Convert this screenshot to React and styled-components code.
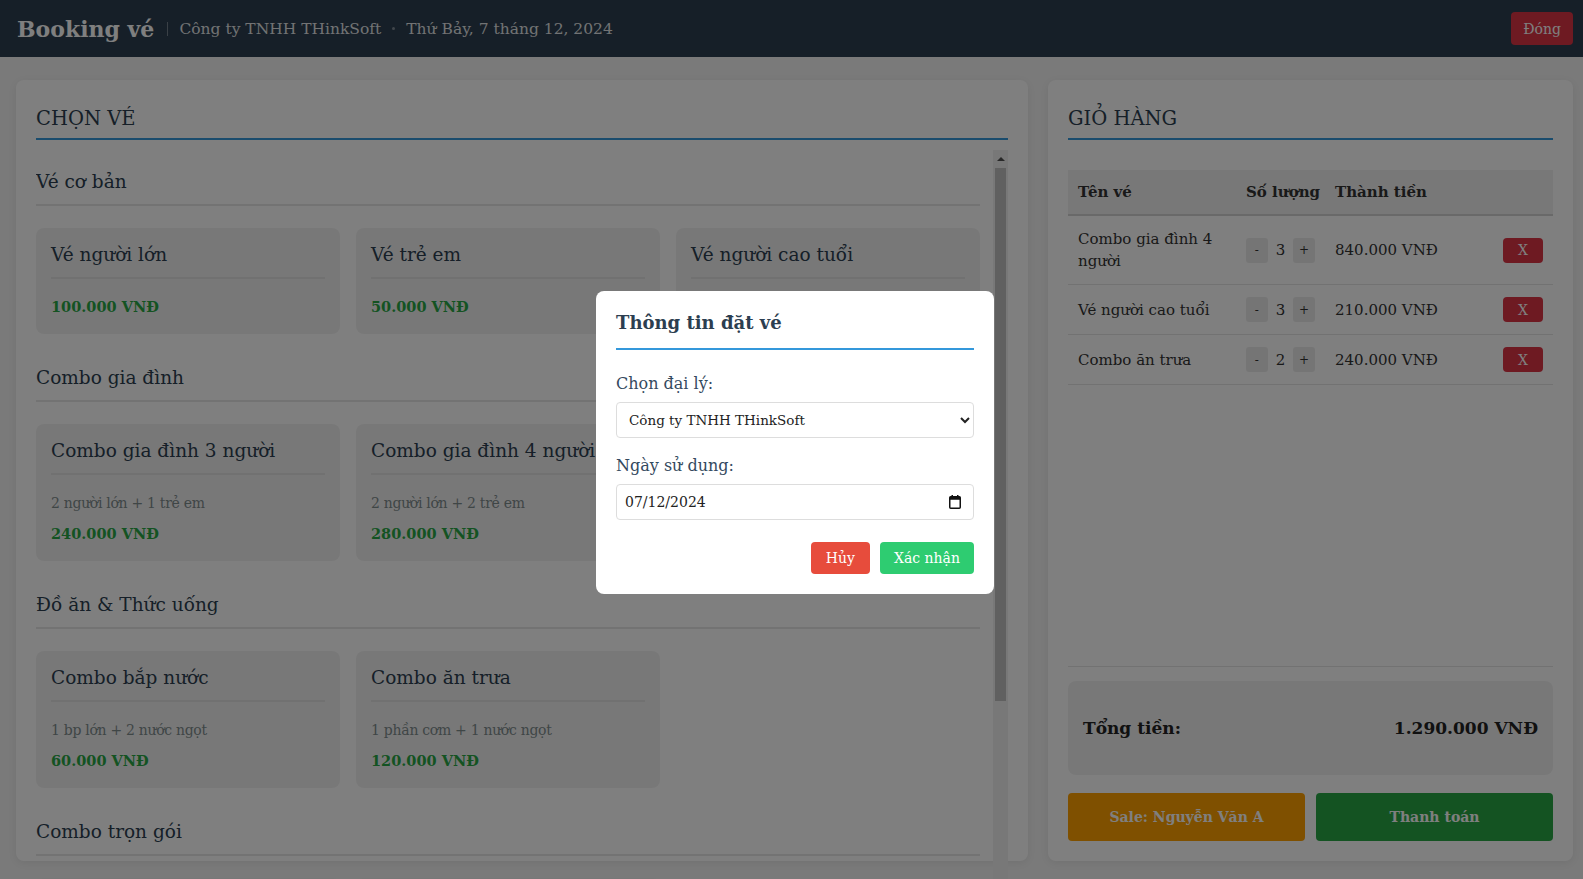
import React, { useState } from "react";
import styled, { createGlobalStyle } from "styled-components";

const GlobalStyle = createGlobalStyle`
  * { box-sizing: border-box; }
  html, body { margin: 0; padding: 0; height: 100%; overflow: hidden; }
  body {
    font-family: "DejaVu Serif", "Liberation Serif", serif;
    background: #f4f4f4;
    color: #333;
  }
`;

const serif = `"DejaVu Serif", "Liberation Serif", serif`;

const TICKETS = [
  {
    title: "Vé cơ bản",
    items: [
      { name: "Vé người lớn", price: "100.000 VNĐ" },
      { name: "Vé trẻ em", price: "50.000 VNĐ" },
      { name: "Vé người cao tuổi", price: "70.000 VNĐ" },
    ],
  },
  {
    title: "Combo gia đình",
    items: [
      { name: "Combo gia đình 3 người", desc: "2 người lớn + 1 trẻ em", price: "240.000 VNĐ" },
      { name: "Combo gia đình 4 người", desc: "2 người lớn + 2 trẻ em", price: "280.000 VNĐ" },
    ],
  },
  {
    title: "Đồ ăn & Thức uống",
    items: [
      { name: "Combo bắp nước", desc: "1 bp lớn + 2 nước ngọt", price: "60.000 VNĐ" },
      { name: "Combo ăn trưa", desc: "1 phần cơm + 1 nước ngọt", price: "120.000 VNĐ" },
    ],
  },
  {
    title: "Combo trọn gói",
    items: [
      { name: "Combo cả ngày", desc: "1 vé + 1 phần cơm + 1 nước", price: "200.000 VNĐ" },
      { name: "Combo nhóm bạn", desc: "4 vé + 2 combo bắp nước", price: "450.000 VNĐ" },
    ],
  },
];

const CART = [
  { name: "Combo gia đình 4 người", qty: 3, total: "840.000 VNĐ" },
  { name: "Vé người cao tuổi", qty: 3, total: "210.000 VNĐ" },
  { name: "Combo ăn trưa", qty: 2, total: "240.000 VNĐ" },
];

const Header = styled.header`
  height: 57px;
  background: #2c3e50;
  display: flex;
  align-items: center;
  justify-content: space-between;
  padding: 0 10px 0 17px;
`;

const Brand = styled.div`
  display: flex;
  align-items: center;
`;

const Logo = styled.h1`
  margin: 0;
  font-size: 22px;
  font-weight: bold;
  color: #fff;
`;

const Divider = styled.span`
  width: 1px;
  height: 14px;
  background: rgba(255, 255, 255, 0.35);
  margin: 0 11px 0 13px;
`;

const Meta = styled.span`
  font-size: 15.5px;
  color: rgba(255, 255, 255, 0.88);
`;

const Dot = styled.span`
  width: 3px;
  height: 3px;
  border-radius: 50%;
  background: rgba(255, 255, 255, 0.4);
  margin: 0 11px;
`;

const Button = styled.button`
  border: none;
  border-radius: 4px;
  color: #fff;
  font-family: ${serif};
  font-size: ${(p) => p.$fs || 14}px;
  cursor: pointer;
  background: ${(p) => p.$bg};
  height: ${(p) => p.$h || 32}px;
  padding: 0 ${(p) => p.$px ?? 15}px;
  font-weight: ${(p) => (p.$bold ? "bold" : "normal")};
`;

const Main = styled.main`
  height: calc(100vh - 57px);
  display: grid;
  grid-template-columns: 1fr 525px;
  gap: 20px;
  padding: 23px 10px 18px 16px;
`;

const Panel = styled.section`
  background: #fff;
  border-radius: 8px;
  box-shadow: 0 2px 8px rgba(0, 0, 0, 0.07);
  padding: 20px;
  display: flex;
  flex-direction: column;
  min-height: 0;
`;

const PanelTitle = styled.h2`
  margin: 0;
  font-size: 19.5px;
  font-weight: normal;
  color: #2c3e50;
  padding: 7px 0 8px;
  border-bottom: 2px solid #3498db;
`;

const ScrollWrap = styled.div`
  margin-top: 10px;
  height: 760px;
  flex-shrink: 0;
  display: flex;
`;

const ScrollContent = styled.div`
  flex: 1;
  min-width: 0;
  overflow: hidden;
  padding: 20px 13px 0 0;
`;

const ScrollTrack = styled.div`
  width: 15px;
  flex-shrink: 0;
  background: #f1f1f1;
  display: flex;
  flex-direction: column;
`;

const ScrollArrow = styled.div`
  height: 17px;
  display: flex;
  align-items: center;
  justify-content: center;
  &::before {
    content: "";
    border-left: 4px solid transparent;
    border-right: 4px solid transparent;
    border-bottom: 4px solid #505050;
  }
`;

const ScrollThumb = styled.div`
  height: ${(p) => p.$size}px;
  margin: 1px 2px 0;
  background: #c1c1c1;
`;

const Section = styled.div`
  margin-bottom: 32px;
`;

const SectionTitle = styled.h3`
  margin: 0 0 22px;
  font-size: 18.5px;
  font-weight: normal;
  line-height: 24px;
  color: #2c3e50;
  padding-bottom: 10px;
  border-bottom: 2px solid #e6e6e6;
`;

const CardGrid = styled.div`
  display: grid;
  grid-template-columns: repeat(3, 1fr);
  gap: 16px;
`;

const Card = styled.div`
  background: #f1f1f1;
  border-radius: 8px;
  padding: 15px 15px 18px;
`;

const CardTitle = styled.h4`
  margin: 0 0 18px;
  font-size: 18.5px;
  font-weight: normal;
  line-height: 24px;
  color: #2c3e50;
  padding-bottom: 10px;
  border-bottom: 2px solid #e3e3e3;
  white-space: nowrap;
`;

const CardDesc = styled.p`
  margin: 2px 0 11px;
  font-size: 14px;
  line-height: 20px;
  letter-spacing: -0.3px;
  color: #7f8c8d;
`;

const CardPrice = styled.p`
  margin: 0;
  font-size: 14.5px;
  line-height: 19px;
  font-weight: bold;
  color: #28a745;
`;

const CartBody = styled.div`
  flex: 1;
  min-height: 0;
  margin-top: 30px;
`;

const Table = styled.table`
  width: 100%;
  border-collapse: collapse;
  table-layout: fixed;
  font-size: 15px;
  color: #333;
`;

const Th = styled.th`
  text-align: left;
  font-weight: bold;
  background: #f0f0f0;
  padding: 10px;
  line-height: 24px;
  border-bottom: 2px solid #d2d2d2;
  white-space: nowrap;
  width: ${(p) => (p.$w ? `${p.$w}px` : "auto")};
`;

const Td = styled.td`
  padding: 12px 10px;
  line-height: 22px;
  vertical-align: middle;
  border-bottom: 1px solid #e4e4e4;
`;

const Qty = styled.div`
  display: flex;
  align-items: center;
`;

const QtyBtn = styled.button`
  width: 24px;
  height: 25px;
  border: none;
  border-radius: 3px;
  background: #ebebeb;
  color: #333;
  font-family: ${serif};
  font-size: 12px;
  padding: 0;
`;

const QtyValue = styled.span`
  width: 28px;
  text-align: center;
  font-size: 15px;
`;

const CartFooter = styled.div`
  border-top: 1px solid #e4e4e4;
  padding-top: 14px;
`;

const TotalBox = styled.div`
  height: 94px;
  background: #f1f1f1;
  border-radius: 8px;
  padding: 0 15px;
  display: flex;
  align-items: center;
  justify-content: space-between;
  font-size: 17px;
  font-weight: bold;
  color: #222;
`;

const Actions = styled.div`
  display: flex;
  gap: 11px;
  margin-top: 18px;
  & > button {
    flex: 1;
  }
`;

const Overlay = styled.div`
  position: fixed;
  inset: 0;
  background: rgba(0, 0, 0, 0.5);
  display: flex;
  align-items: center;
  justify-content: center;
`;

const Modal = styled.div`
  width: 398px;
  margin: 6px 0 0 7px;
  background: #fff;
  border-radius: 8px;
  padding: 20px;
  color: #34495e;
`;

const ModalTitle = styled.h3`
  margin: 0 0 24px;
  font-size: 18px;
  line-height: 24px;
  font-weight: bold;
  color: #2c3e50;
  padding-bottom: 13px;
  border-bottom: 2px solid #3498db;
`;

const Field = styled.div`
  margin-bottom: ${(p) => (p.$last ? 0 : 18)}px;
`;

const Label = styled.label`
  display: block;
  font-size: 16px;
  line-height: 20px;
  margin-bottom: 8px;
`;

const Select = styled.select`
  width: 100%;
  height: 36px;
  border: 1px solid #ddd;
  border-radius: 4px;
  background: #fff;
  padding: 0 8px;
  font-family: ${serif};
  font-size: 13.5px;
  color: #222;
`;

const DateWrap = styled.div`
  position: relative;
`;

const Input = styled.input`
  width: 100%;
  height: 36px;
  border: 1px solid #ddd;
  border-radius: 4px;
  padding: 0 8px;
  font-family: ${serif};
  font-size: 14px;
  color: #222;
`;

const CalIcon = styled.svg`
  position: absolute;
  right: 13px;
  top: 11px;
`;

const ModalFooter = styled.div`
  display: flex;
  justify-content: flex-end;
  gap: 10px;
  margin-top: 22px;
`;

function TicketCard({ item }) {
  return (
    <Card>
      <CardTitle>{item.name}</CardTitle>
      {item.desc && <CardDesc>{item.desc}</CardDesc>}
      <CardPrice>{item.price}</CardPrice>
    </Card>
  );
}

export default function App() {
  const [agent, setAgent] = useState("thinksoft");
  const [date, setDate] = useState("07/12/2024");

  return (
    <>
      <GlobalStyle />
      <Header>
        <Brand>
          <Logo>Booking vé</Logo>
          <Divider />
          <Meta>Công ty TNHH THinkSoft</Meta>
          <Dot />
          <Meta>Thứ Bảy, 7 tháng 12, 2024</Meta>
        </Brand>
        <Button $bg="#dc3545" $h={33} $px={12}>
          Đóng
        </Button>
      </Header>

      <Main>
        <Panel>
          <PanelTitle>CHỌN VÉ</PanelTitle>
          <ScrollWrap>
            <ScrollContent>
              {TICKETS.map((group) => (
                <Section key={group.title}>
                  <SectionTitle>{group.title}</SectionTitle>
                  <CardGrid>
                    {group.items.map((item) => (
                      <TicketCard key={item.name} item={item} />
                    ))}
                  </CardGrid>
                </Section>
              ))}
            </ScrollContent>
            <ScrollTrack>
              <ScrollArrow />
              <ScrollThumb $size={533} />
            </ScrollTrack>
          </ScrollWrap>
        </Panel>

        <Panel>
          <PanelTitle>GIỎ HÀNG</PanelTitle>
          <CartBody>
            <Table>
              <thead>
                <tr>
                  <Th $w={168}>Tên vé</Th>
                  <Th $w={89}>Số lượng</Th>
                  <Th $w={168}>Thành tiền</Th>
                  <Th />
                </tr>
              </thead>
              <tbody>
                {CART.map((row) => (
                  <tr key={row.name}>
                    <Td>{row.name}</Td>
                    <Td>
                      <Qty>
                        <QtyBtn>-</QtyBtn>
                        <QtyValue>{row.qty}</QtyValue>
                        <QtyBtn>+</QtyBtn>
                      </Qty>
                    </Td>
                    <Td>{row.total}</Td>
                    <Td>
                      <Button $bg="#dc3545" $h={25} $px={15}>
                        X
                      </Button>
                    </Td>
                  </tr>
                ))}
              </tbody>
            </Table>
          </CartBody>
          <CartFooter>
            <TotalBox>
              <span>Tổng tiền:</span>
              <span>1.290.000 VNĐ</span>
            </TotalBox>
            <Actions>
              <Button $bg="#ffa000" $h={48} $bold>
                Sale: Nguyễn Văn A
              </Button>
              <Button $bg="#28a745" $h={48} $bold>
                Thanh toán
              </Button>
            </Actions>
          </CartFooter>
        </Panel>
      </Main>

      <Overlay>
        <Modal>
          <ModalTitle>Thông tin đặt vé</ModalTitle>
          <Field>
            <Label htmlFor="agent">Chọn đại lý:</Label>
            <Select id="agent" value={agent} onChange={(e) => setAgent(e.target.value)}>
              <option value="thinksoft">Công ty TNHH THinkSoft</option>
            </Select>
          </Field>
          <Field $last>
            <Label htmlFor="date">Ngày sử dụng:</Label>
            <DateWrap>
              <Input id="date" value={date} onChange={(e) => setDate(e.target.value)} />
              <CalIcon width="12" height="14" viewBox="0 0 12 14">
                <rect x="0.75" y="1.75" width="10.5" height="11.5" rx="1" fill="none" stroke="#111" strokeWidth="1.5" />
                <rect x="0.75" y="1.75" width="10.5" height="3" fill="#111" />
                <rect x="2.5" y="0" width="1.5" height="3" fill="#111" />
                <rect x="8" y="0" width="1.5" height="3" fill="#111" />
              </CalIcon>
            </DateWrap>
          </Field>
          <ModalFooter>
            <Button $bg="#e74c3c">Hủy</Button>
            <Button $bg="#2ecc71" $px={14}>
              Xác nhận
            </Button>
          </ModalFooter>
        </Modal>
      </Overlay>
    </>
  );
}
